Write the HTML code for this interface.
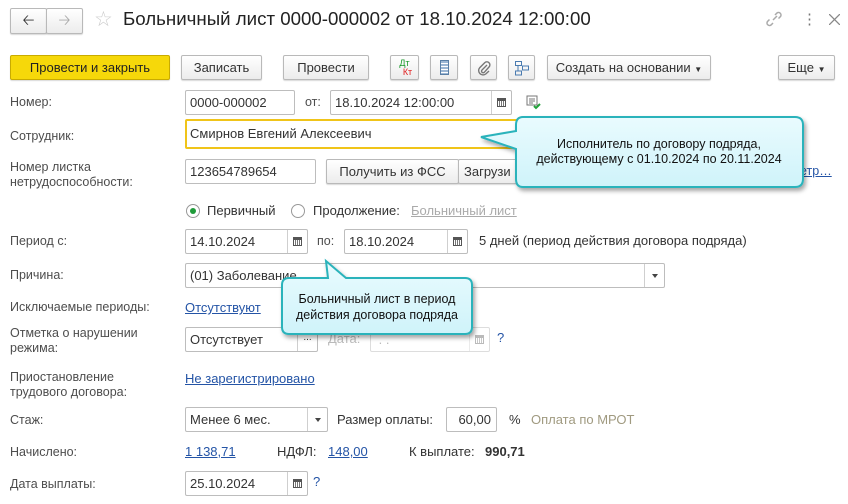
<!DOCTYPE html>
<html><head><meta charset="utf-8"><style>
*{box-sizing:border-box;margin:0;padding:0}
body{width:848px;height:504px;background:#fff;position:relative;overflow:hidden;font-family:"Liberation Sans",Arial,sans-serif;font-size:12.5px;color:#333}
.a{position:absolute;white-space:nowrap}
.btn{position:absolute;height:25px;border:1px solid #b9b9b9;border-radius:2px;background:linear-gradient(#fff,#ececec);box-shadow:0 1px 1px rgba(0,0,0,.15);text-align:center;line-height:23px;font-size:13px;color:#333}
.inp{position:absolute;height:25px;border:1px solid #bdbdbd;border-radius:2px;background:#fff;line-height:23px;padding-left:4px;font-size:13px;color:#333}
.lbl{position:absolute;color:#4d4d4d;font-size:12.5px;line-height:15px}
.lnk{color:#2454a6;text-decoration:underline}
.cal{position:absolute;right:0;top:0;width:20px;height:23px;border-left:1px solid #cfcfcf;display:flex;align-items:center;justify-content:center}
.cal i{display:block;width:9px;height:9px;border:1px solid #555;border-top-width:3px;background:repeating-linear-gradient(90deg,#fff 0 1px,#777 1px 2px)}
.dd{position:absolute;right:0;top:0;width:20px;height:23px;border-left:1px solid #cfcfcf}
.dd.ar:after{content:"";position:absolute;left:7px;top:10px;border:3px solid transparent;border-top:4px solid #444}
</style></head><body>
<!-- header -->
<div class="btn" style="left:10px;top:8px;width:37px;height:26px;line-height:24px;font-size:15px">&#129120;</div>
<div class="btn" style="left:46px;top:8px;width:37px;height:26px;line-height:24px;font-size:15px;color:#aaa">&#129122;</div>
<div class="a" style="left:94px;top:7px;font-size:21px;color:#ccc">☆</div>
<div class="a" style="left:123px;top:8px;font-size:18.7px;color:#222">Больничный лист 0000-000002 от 18.10.2024 12:00:00</div>
<svg class="a" style="left:766px;top:11px" width="16" height="16" fill="none" stroke="#aaa" stroke-width="1.5"><path d="M7 9l4-4"/><path d="M9 4l2-2a2.5 2.5 0 0 1 3.5 3.5l-2 2"/><path d="M7 12l-2 2a2.5 2.5 0 0 1-3.5-3.5l2-2"/></svg>
<div class="a" style="left:802px;top:10px;font-size:15px;color:#777">⋮</div>
<svg class="a" style="left:829px;top:14px" width="11" height="11" stroke="#888" stroke-width="1.3"><path d="M0 0L11 11M11 0L0 11"/></svg>
<!-- toolbar -->
<div class="btn" style="left:10px;top:55px;width:160px;background:#f6d80a;border-color:#c9ab00;color:#222">Провести и закрыть</div>
<div class="btn" style="left:181px;top:55px;width:81px">Записать</div>
<div class="btn" style="left:283px;top:55px;width:86px">Провести</div>
<div class="btn" style="left:390px;top:55px;width:29px;font-size:9px;line-height:9px;padding-top:3px"><span style="color:#1a9a2a">Дт</span><br><span style="color:#e02020;padding-left:6px">Кт</span></div>
<div class="btn" style="left:430px;top:55px;width:28px"><span style="display:inline-block;width:9px;height:15px;margin-top:4px;border:1px solid #5a7fa6;background:repeating-linear-gradient(#9bb6d4 0 2px,#fff 2px 3px)"></span></div>
<div class="btn" style="left:470px;top:55px;width:27px"><svg width="14" height="16" style="margin-top:4px" fill="none" stroke="#777" stroke-width="1.4"><path d="M10 5L5 10a1.6 1.6 0 0 0 2.3 2.3L12 7a3 3 0 0 0-4.3-4.3L2.7 7.7a4.4 4.4 0 0 0 6.2 6.2L12 11"/></svg></div>
<div class="btn" style="left:508px;top:55px;width:27px"><svg width="16" height="16" style="margin-top:4px" fill="none" stroke="#4a7bb0"><rect x="1.5" y="1.5" width="6" height="4"/><rect x="8.5" y="6" width="6" height="4"/><rect x="1.5" y="11" width="6" height="4"/><path d="M4 6v5"/></svg></div>
<div class="btn" style="left:547px;top:55px;width:164px">Создать на основании <span style="font-size:8px">▼</span></div>
<div class="btn" style="left:778px;top:55px;width:57px">Еще <span style="font-size:8px">▼</span></div>
<!-- Номер -->
<div class="lbl" style="left:10px;top:95px">Номер:</div>
<div class="inp" style="left:185px;top:90px;width:110px">0000-000002</div>
<div class="lbl" style="left:305px;top:95px">от:</div>
<div class="inp" style="left:330px;top:90px;width:182px">18.10.2024 12:00:00<div class="cal"><i></i></div></div>
<svg class="a" style="left:526px;top:95px" width="16" height="15"><rect x="1" y="1" width="10" height="9" fill="#fff" stroke="#777"/><path d="M3 4h6M3 6h6M3 8h4" stroke="#777"/><path d="M8 11l2 2 4-4" stroke="#22a23a" stroke-width="2" fill="none"/></svg>
<!-- Сотрудник -->
<div class="lbl" style="left:10px;top:129px">Сотрудник:</div>
<div class="inp" style="left:185px;top:119px;width:340px;height:30px;border:2px solid #f0c419;line-height:26px;padding-left:3px">Смирнов Евгений Алексеевич</div>
<!-- Номер листка -->
<div class="lbl" style="left:10px;top:160px">Номер листка<br>нетрудоспособности:</div>
<div class="inp" style="left:185px;top:159px;width:131px">123654789654</div>
<div class="btn" style="left:326px;top:159px;width:133px">Получить из ФСС</div>
<div class="btn" style="left:458px;top:159px;width:80px;text-align:left;padding-left:5px">Загрузи</div>
<div class="a lnk" style="left:800px;top:164px">етр…</div>
<!-- radios -->
<div class="a" style="left:186px;top:204px;width:14px;height:14px;border:1px solid #999;border-radius:50%;background:#fff"><div style="width:6px;height:6px;border-radius:50%;background:#1f9b3a;margin:3px"></div></div>
<div class="a" style="left:207px;top:203px;font-size:13px">Первичный</div>
<div class="a" style="left:291px;top:204px;width:14px;height:14px;border:1px solid #999;border-radius:50%"></div>
<div class="a" style="left:313px;top:203px;font-size:13px">Продолжение:</div>
<div class="a" style="left:411px;top:203px;font-size:13px;color:#aaa;text-decoration:underline">Больничный лист</div>
<!-- Период -->
<div class="lbl" style="left:10px;top:234px">Период с:</div>
<div class="inp" style="left:185px;top:229px;width:123px">14.10.2024<div class="cal"><i></i></div></div>
<div class="lbl" style="left:317px;top:234px">по:</div>
<div class="inp" style="left:344px;top:229px;width:124px">18.10.2024<div class="cal"><i></i></div></div>
<div class="a" style="left:479px;top:233px;font-size:13px">5 дней (период действия договора подряда)</div>
<!-- Причина -->
<div class="lbl" style="left:10px;top:268px">Причина:</div>
<div class="inp" style="left:185px;top:263px;width:480px">(01) Заболевание<div class="dd ar"></div></div>
<div class="lbl" style="left:10px;top:300px">Исключаемые периоды:</div>
<div class="a lnk" style="left:185px;top:300px;font-size:13px">Отсутствуют</div>
<div class="lbl" style="left:10px;top:326px">Отметка о нарушении<br>режима:</div>
<div class="inp" style="left:185px;top:327px;width:133px">Отсутствует<div class="dd" style="font-size:10px;text-align:center;line-height:20px">...</div></div>
<div class="a" style="left:328px;top:331px;color:#bbb;font-size:13px">Дата:</div>
<div class="inp" style="left:370px;top:327px;width:120px;border-color:#ddd;color:#bbb">&nbsp;. .<div class="cal" style="opacity:.4"><i></i></div></div>
<div class="a" style="left:497px;top:330px;color:#2454a6;font-size:13px">?</div>
<div class="lbl" style="left:10px;top:370px">Приостановление<br>трудового договора:</div>
<div class="a lnk" style="left:185px;top:371px;font-size:13px">Не зарегистрировано</div>
<!-- Стаж -->
<div class="lbl" style="left:10px;top:413px">Стаж:</div>
<div class="inp" style="left:185px;top:407px;width:143px">Менее 6 мес.<div class="dd ar"></div></div>
<div class="a" style="left:337px;top:412px;font-size:13px">Размер оплаты:</div>
<div class="inp" style="left:446px;top:407px;width:51px;text-align:right;padding-right:5px">60,00</div>
<div class="a" style="left:509px;top:412px;font-size:13px">%</div>
<div class="a" style="left:531px;top:412px;font-size:13px;color:#a09a80">Оплата по МРОТ</div>
<div class="lbl" style="left:10px;top:445px">Начислено:</div>
<div class="a lnk" style="left:185px;top:444px;font-size:13px">1 138,71</div>
<div class="a" style="left:277px;top:444px;font-size:13px">НДФЛ:</div>
<div class="a lnk" style="left:328px;top:444px;font-size:13px">148,00</div>
<div class="a" style="left:409px;top:444px;font-size:13px">К выплате:</div>
<div class="a" style="left:485px;top:444px;font-size:13px;font-weight:bold">990,71</div>
<div class="lbl" style="left:10px;top:477px">Дата выплаты:</div>
<div class="inp" style="left:185px;top:471px;width:123px">25.10.2024<div class="cal"><i></i></div></div>
<div class="a" style="left:313px;top:474px;color:#2454a6;font-size:13px">?</div>
<!-- callouts -->
<svg class="a" style="left:0;top:0" width="848" height="504">
<defs><linearGradient id="g" x1="0" y1="0" x2="0" y2="1"><stop offset="0" stop-color="#e9fbfe"/><stop offset="1" stop-color="#cff3fa"/></linearGradient>
<filter id="s" x="-10%" y="-10%" width="130%" height="140%"><feDropShadow dx="2" dy="3" stdDeviation="2" flood-opacity=".35"/></filter></defs>
<path filter="url(#s)" d="M523 117H795Q803 117 803 125V179Q803 187 795 187H523Q516 187 516 179V149L481 137L516 131V125Q516 117 523 117Z" fill="url(#g)" stroke="#2bb3bb" stroke-width="2"/>
<text x="659" y="148" text-anchor="middle" font-family="Liberation Sans,Arial,sans-serif" font-size="12.5" fill="#111">Исполнитель по договору подряда,</text>
<text x="659" y="163" text-anchor="middle" font-family="Liberation Sans,Arial,sans-serif" font-size="12.5" fill="#111">действующему с 01.10.2024 по 20.11.2024</text>
<path filter="url(#s)" d="M289 278H328L326 261L346 278H465Q472 278 472 285V327Q472 334 465 334H289Q282 334 282 327V285Q282 278 289 278Z" fill="url(#g)" stroke="#2bb3bb" stroke-width="2"/>
<text x="377" y="303" text-anchor="middle" font-family="Liberation Sans,Arial,sans-serif" font-size="12.5" fill="#111">Больничный лист в период</text>
<text x="377" y="319" text-anchor="middle" font-family="Liberation Sans,Arial,sans-serif" font-size="12.5" fill="#111">действия договора подряда</text>
</svg>
</body></html>
